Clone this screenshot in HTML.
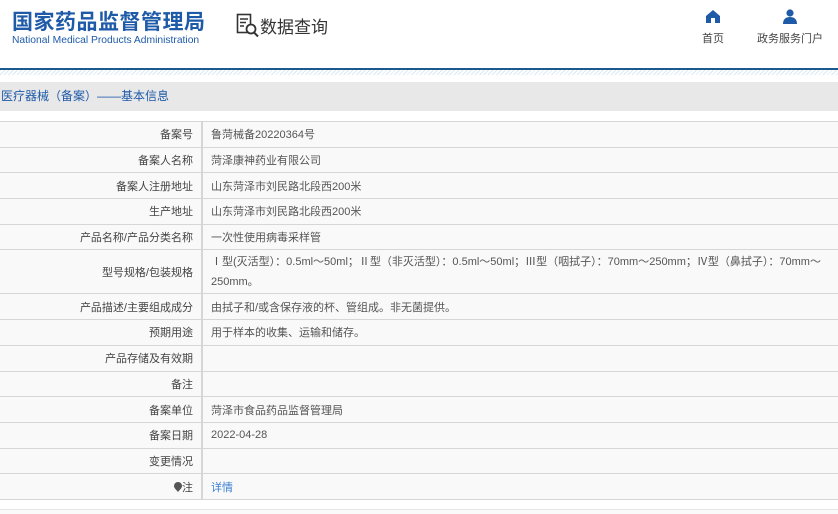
<!DOCTYPE html>
<html><head><meta charset="utf-8"><style>
*{margin:0;padding:0;box-sizing:border-box}
body{width:838px;height:514px;overflow:hidden;background:#fff;font-family:"Liberation Sans","Noto Sans CJK SC",sans-serif;color:#333}
.hdr{position:relative;height:68px}
.logo1{position:absolute;left:12px;top:6px;font-size:21px;font-weight:bold;color:#1e5aa8;letter-spacing:0.5px;font-family:"Noto Sans CJK SC",sans-serif}
.logo2{position:absolute;left:12px;top:35px;font-size:10.3px;color:#1e5aa8}
.sq{position:absolute;left:236px;top:12px;font-size:17px;color:#333;font-family:"Noto Sans CJK SC",sans-serif;display:flex;align-items:center}
.nav{position:absolute;top:9px;font-size:11px;color:#444;text-align:center}
.line{height:2px;background:#1c5a8e}
.hatch{height:5px;background:repeating-linear-gradient(135deg,#dbe9f5 0 1px,#fff 1px 3px)}
.bar{position:absolute;top:82px;left:0;width:838px;height:29px;background:#e8e8e8;font-size:12px;color:#1e5aa8;line-height:29px;padding-left:1px}
table{position:absolute;top:121px;left:0;width:838px;border-collapse:collapse;font-size:11px;background:#f9f9f9}
td{border-top:1px solid #d6d6d6;border-bottom:1px solid #d6d6d6;height:25.7px;padding:0 8px;vertical-align:middle}
td.l{width:202px;text-align:right;border-right:2px solid #d6d6d6;color:#444}
td.v{color:#555}
.end{position:absolute;top:509px;left:0;width:838px;height:5px;border-top:1px solid #e6e6e6;background:#fafafa}
</style></head><body>
<div class="hdr">
<div class="logo1">国家药品监督管理局</div>
<div class="logo2">National Medical Products Administration</div>
<div class="sq"><svg width="24" height="26" viewBox="0 0 24 26"><rect x="1.5" y="2.5" width="13" height="18" fill="none" stroke="#333" stroke-width="1.6"/><path d="M4 7h8M4 10.5h6M4 14h4" stroke="#333" stroke-width="1.4"/><circle cx="15" cy="17" r="4.5" fill="#fff" stroke="#333" stroke-width="1.8"/><path d="M18 20.5l4 4" stroke="#333" stroke-width="2"/></svg>数据查询</div>
<div class="nav" style="left:702px"><svg width="16" height="14" viewBox="0 0 16 14"><path d="M8 1L1 7v7h5V9h4v5h5V7z" fill="#1e5aa8"/></svg><div style="margin-top:4px">首页</div></div>
<div class="nav" style="left:757px"><svg width="16" height="15" viewBox="0 0 16 15"><circle cx="8" cy="4" r="3.6" fill="#1e5aa8"/><path d="M1 15c0-5 3-7 7-7s7 2 7 7z" fill="#1e5aa8"/></svg><div style="margin-top:3px">政务服务门户</div></div>
</div>
<div class="line"></div><div class="hatch"></div>
<div class="bar">医疗器械（备案）——基本信息</div>
<table>
<tr><td class="l">备案号</td><td class="v">鲁菏械备20220364号</td></tr>
<tr><td class="l">备案人名称</td><td class="v">菏泽康神药业有限公司</td></tr>
<tr><td class="l">备案人注册地址</td><td class="v">山东菏泽市刘民路北段西200米</td></tr>
<tr><td class="l">生产地址</td><td class="v">山东菏泽市刘民路北段西200米</td></tr>
<tr><td class="l">产品名称/产品分类名称</td><td class="v">一次性使用病毒采样管</td></tr>
<tr><td class="l" style="height:44px">型号规格/包装规格</td><td class="v" style="line-height:20px">Ⅰ型(灭活型）：0.5ml～50ml；Ⅱ型（非灭活型）：0.5ml～50ml；Ⅲ型（咽拭子）：70mm～250mm；Ⅳ型（鼻拭子）：70mm～250mm。</td></tr>
<tr><td class="l">产品描述/主要组成成分</td><td class="v">由拭子和/或含保存液的杯、管组成。非无菌提供。</td></tr>
<tr><td class="l">预期用途</td><td class="v">用于样本的收集、运输和储存。</td></tr>
<tr><td class="l">产品存储及有效期</td><td class="v"></td></tr>
<tr><td class="l">备注</td><td class="v"></td></tr>
<tr><td class="l">备案单位</td><td class="v">菏泽市食品药品监督管理局</td></tr>
<tr><td class="l">备案日期</td><td class="v">2022-04-28</td></tr>
<tr><td class="l">变更情况</td><td class="v"></td></tr>
<tr><td class="l"><svg width="8" height="10" viewBox="0 0 8 10" style="vertical-align:-1px"><path d="M4 0a4 4 0 0 1 4 4c0 2-2 3.5-4 6C2 7.5 0 6 0 4a4 4 0 0 1 4-4z" fill="#555"/></svg>注</td><td class="v" style="color:#3a7fd0">详情</td></tr>
</table>
<div class="end"></div>
</body></html>
